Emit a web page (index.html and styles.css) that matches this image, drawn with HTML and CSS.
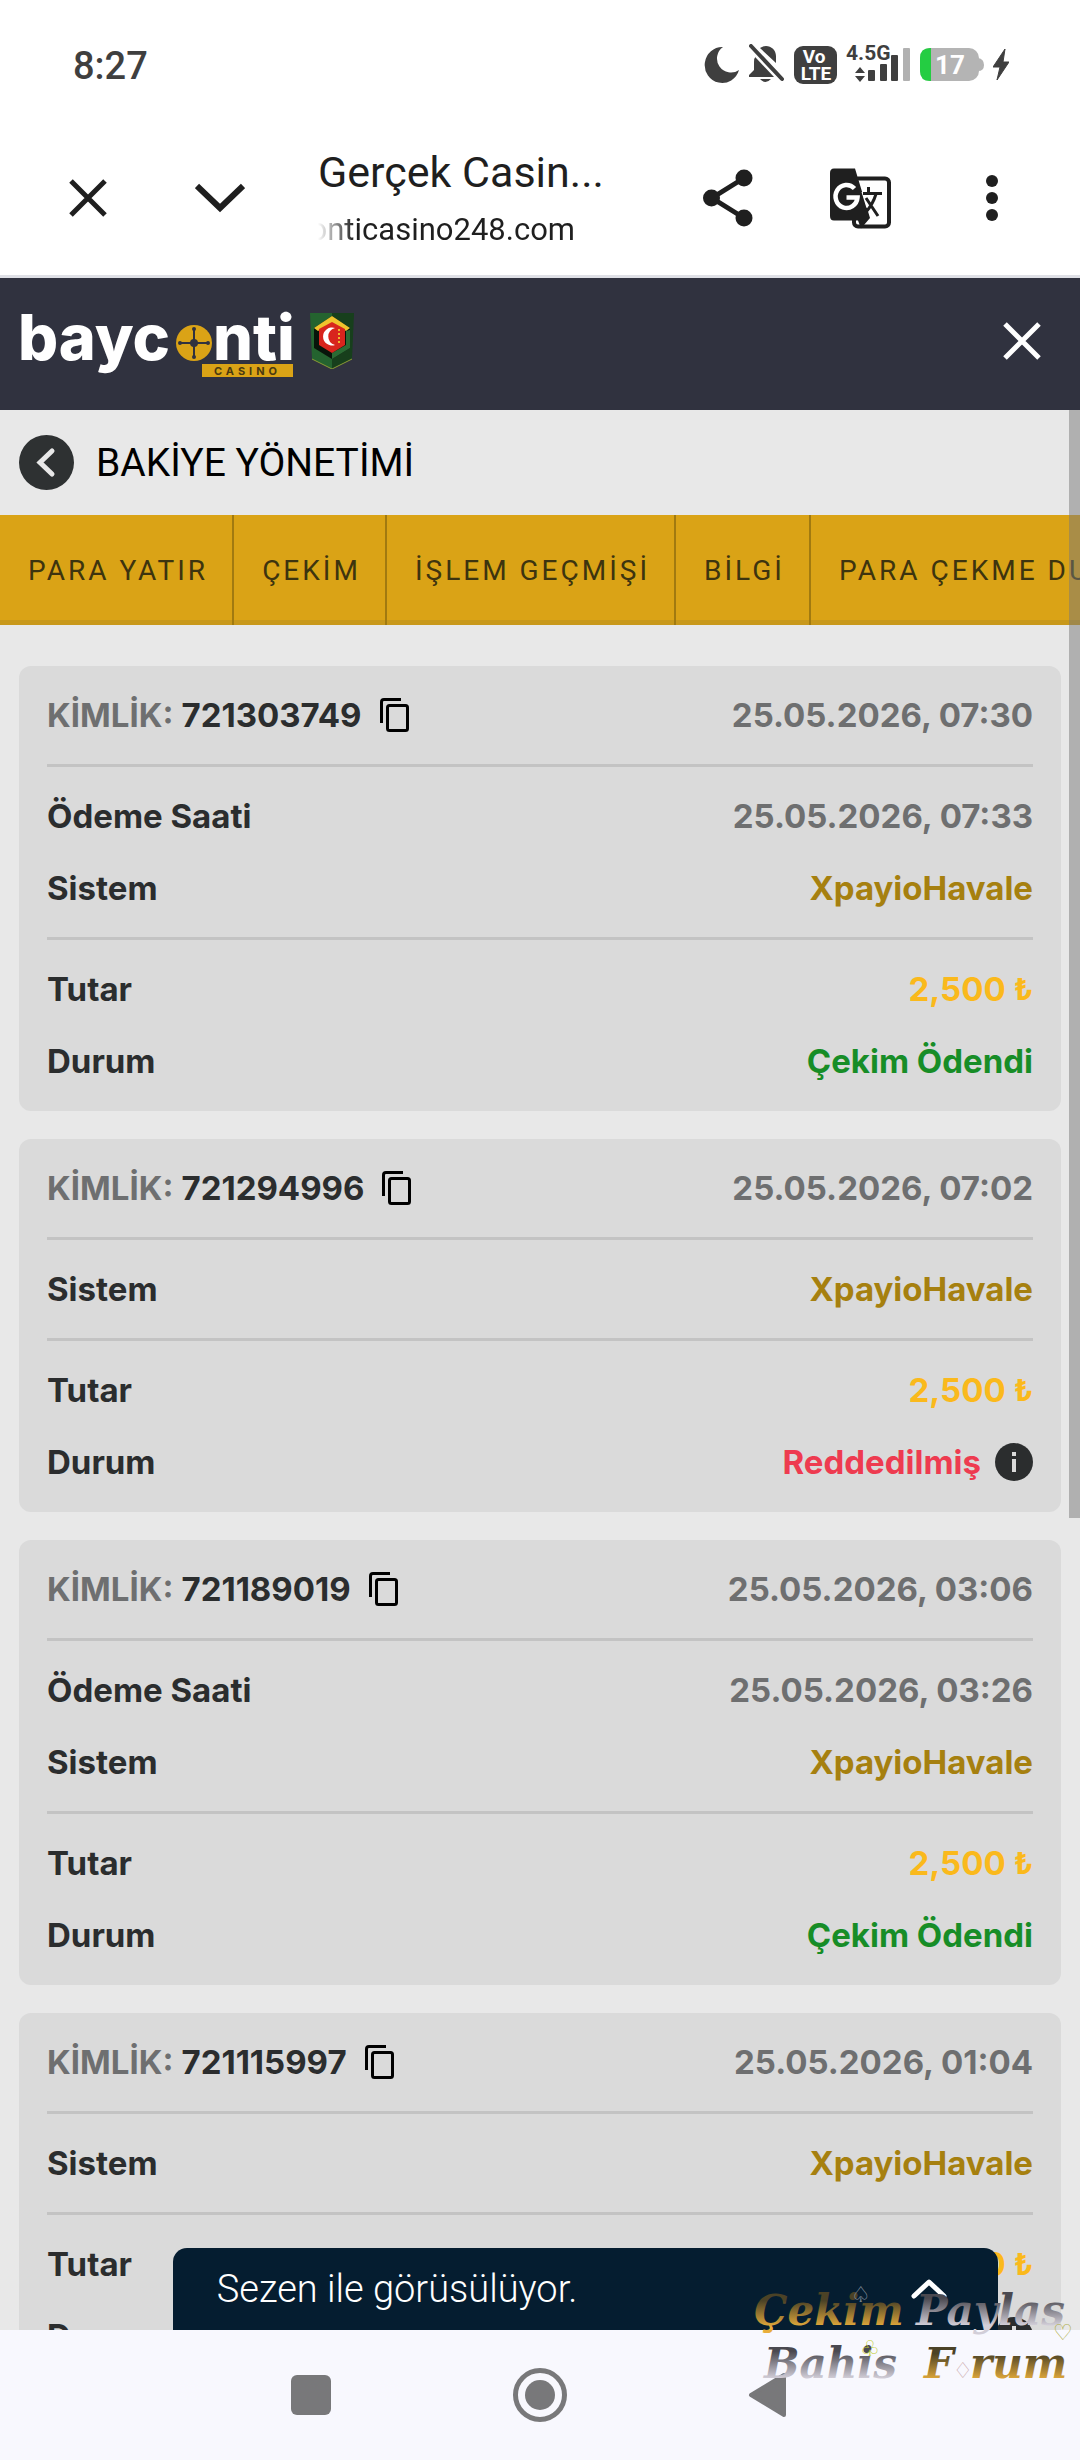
FILE: index.html
```
<!DOCTYPE html>
<html lang="tr">
<head>
<meta charset="utf-8">
<meta name="viewport" content="width=device-width, initial-scale=1">
<title>Gerçek Casino</title>
<link rel="stylesheet" href="styles.css">
</head>
<body>
<svg class="defs" aria-hidden="true">
  <symbol id="copy" viewBox="0 0 30 34"><path d="M1.500 25V4Q1.500 1.500 4 1.500H21" fill="none" stroke="currentColor" stroke-width="3"/><rect x="7.500" y="7.500" width="20" height="25" rx="2" fill="none" stroke="currentColor" stroke-width="3"/></symbol>
  <symbol id="info" viewBox="0 0 38 38"><circle cx="19" cy="19" r="19" fill="#2b2d2e"/><path d="M17 9h4v4h-4zM17 16h4v13h-4z" fill="#dadada"/></symbol>
</svg>
<div class="app">
  <header class="status">
    <span class="clock">8:27</span>
    <div class="status-icons">
      <svg width="36" height="44" viewBox="0 0 36 44"><path d="M19 3A17.500 18 0 1 0 35 26A14 14 0 0 1 19 3Z" fill="#3f3f3f"/></svg>
      <svg width="36" height="44" viewBox="0 0 36 44"><path d="M11 4C18 -1 27 4 27 12V19ZM7 12L28 33H0V31L5 26V18Q5 14 7 12Z" fill="#3f3f3f"/><path d="M2 2L33 35" stroke="#fff" stroke-width="9"/><path d="M2 2L33 35" stroke="#3f3f3f" stroke-width="4" stroke-linecap="round"/><path d="M11 35H22Q16.500 41 11 35Z" fill="#3f3f3f"/></svg>
      <svg width="43" height="44" viewBox="0 0 43 44"><rect y="2" width="43" height="38" rx="9" fill="#3f3f3f"/><text x="20" y="19" class="volte">Vo</text><text x="22" y="36" class="volte">LTE</text></svg>
      <svg width="65" height="44" viewBox="0 0 65 44"><text x="0" y="16" class="net">4.5G</text><path d="M9 29L14 23L19 29ZM9 32L14 38L19 32Z" fill="#3f3f3f"/><g fill="#3f3f3f"><rect x="22" y="26" width="7" height="11" rx="1"/><rect x="34" y="20" width="7" height="17" rx="1"/><rect x="45" y="11" width="7" height="26" rx="1"/></g><rect x="57" y="4" width="7" height="33" rx="1" fill="#b1b1b1"/></svg>
      <svg width="64" height="44" viewBox="0 0 64 44"><rect y="4" width="59" height="33" rx="10" fill="#b4b4b4"/><path d="M58 14q6 1 6 7t-6 6z" fill="#b4b4b4"/><path d="M11 4H10Q0 4 0 14V27Q0 37 10 37H11Z" fill="#24cd42"/><text x="30" y="30" class="charge">17</text></svg>
      <svg width="16" height="44" viewBox="0 0 16 44"><path d="M12 5L0 23H7L4 36L16 18H10Z" fill="#3f3f3f" stroke="#3f3f3f" stroke-width="1"/></svg>
    </div>
  </header>

  <div class="toolbar">
    <button class="tool" aria-label="Kapat"><svg width="40" height="40" viewBox="0 0 40 40"><path d="M3 3L37 37M37 3L3 37" stroke="#1f1f1f" stroke-width="5"/></svg></button>
    <button class="tool" aria-label="Küçült"><svg width="50" height="30" viewBox="0 0 50 30"><path d="M2 3L25 25L48 3" fill="none" stroke="#1f1f1f" stroke-width="6"/></svg></button>
    <div class="page-id">
      <div class="page-title">Gerçek Casin...</div>
      <div class="page-url"><span>onticasino248.com</span></div>
    </div>
    <button class="tool" aria-label="Paylaş"><svg width="50" height="58" viewBox="0 0 50 58"><path d="M41 9L9 29L41 49" fill="none" stroke="#1f1f1f" stroke-width="5"/><g fill="#1f1f1f"><circle cx="41" cy="9" r="8.500"/><circle cx="8.500" cy="29" r="8.500"/><circle cx="41" cy="49" r="8.500"/></g></svg></button>
    <button class="tool" aria-label="Çevir"><svg width="80" height="84" viewBox="0 0 80 84"><rect x="34" y="22.500" width="35" height="48" rx="4" fill="#fff" stroke="#1f1f1f" stroke-width="4"/><path d="M14 12.500H35L50 62L41 72.500L38 64.500H14Q10 64.500 10 60V17Q10 12.500 14 12.500Z" fill="#1f1f1f"/><path d="M34.500 32.500A11 11.500 0 1 0 37.500 41.500H26.500" fill="none" stroke="#fff" stroke-width="4.500"/><path d="M41.500 36L46.500 52L55 38Z" fill="#fff"/><path d="M48.500 31V37M43 37.500H62M56 38Q53 48 46 56M46 42L58 60" fill="none" stroke="#1f1f1f" stroke-width="3"/></svg></button>
    <button class="tool" aria-label="Menü"><svg width="12" height="46" viewBox="0 0 12 46"><g fill="#1f1f1f"><circle cx="6" cy="6" r="6"/><circle cx="6" cy="23" r="6"/><circle cx="6" cy="40" r="6"/></g></svg></button>
  </div>

  <div class="site">
    <div class="brand">
      <a href="#" class="logo" aria-label="bayconti casino">
        <svg width="290" height="80" viewBox="0 0 290 80">
          <text x="-2" y="59" class="word">bayc</text>
          <circle cx="174" cy="42" r="18" fill="#daa316"/>
          <g stroke="#30323f" stroke-width="2" fill="#30323f"><path d="M174 28V56M160 42H188"/><circle cx="174" cy="42" r="3"/><circle cx="174" cy="28" r="1"/><circle cx="174" cy="56" r="1"/><circle cx="160" cy="42" r="1"/><circle cx="188" cy="42" r="1"/></g>
          <text x="193" y="59" class="word">nti</text>
          <rect x="182" y="63" width="91" height="13" fill="#daa316"/>
          <text x="194" y="74" class="casino">CASINO</text>
        </svg>
        <svg width="44" height="56" viewBox="0 0 44 56"><path d="M0 0H22V56L2 46Z" fill="#24632f"/><path d="M22 0H44L42 46L22 56Z" fill="#173f1c"/><path d="M4 15L22 3L40 15V35L22 46L4 35Z" fill="#08150a"/><path d="M4 15L22 3L40 15L36 18L22 10L8 18Z" fill="#f0c32d"/><path d="M22 46L40 35V17L36 18V32L22 40Z" fill="#2b6b34"/><path d="M22 9L35 16V32L22 40L9 32V16Z" fill="#d8251d"/><path d="M25 15A9 9 0 1 0 25 32A10 9 0 0 1 25 15Z" fill="#fff"/><path d="M29 16V32" stroke="#efb52c" stroke-width="2" stroke-dasharray="2 2"/><path d="M2 46L22 56L42 46" fill="none" stroke="#8b9a35" stroke-width="1"/></svg>
      </a>
      <button class="close" aria-label="Kapat"><svg width="38" height="38" viewBox="0 0 38 38"><path d="M2 2L36 36M36 2L2 36" stroke="#fff" stroke-width="5"/></svg></button>
    </div>

    <main class="panel">
      <div class="heading">
        <button class="back" aria-label="Geri"><svg width="55" height="55" viewBox="0 0 55 55"><circle cx="27.500" cy="27.500" r="27.500" fill="#2e3132"/><path d="M33 16L21 27.500L33 39" fill="none" stroke="#e8e8e8" stroke-width="5" stroke-linecap="round"/></svg></button>
        <h1>BAKİYE YÖNETİMİ</h1>
      </div>
      <nav class="tabs">
        <a href="#">PARA YATIR</a><a href="#">ÇEKİM</a><a href="#">İŞLEM GEÇMİŞİ</a><a href="#">BİLGİ</a><a href="#">PARA ÇEKME DURUMU</a>
      </nav>
      <div class="list">
        <article class="card">
          <div class="part row"><div class="id"><span>KİMLİK:</span><b>721303749</b><button class="copy" aria-label="Kopyala"><svg width="30" height="34"><use href="#copy"/></svg></button></div><time>25.05.2026, 07:30</time></div>
          <dl class="part"><div class="row"><dt>Ödeme Saati</dt><dd class="muted">25.05.2026, 07:33</dd></div><div class="row"><dt>Sistem</dt><dd class="system">XpayioHavale</dd></div></dl>
          <dl class="part"><div class="row"><dt>Tutar</dt><dd class="amount">2,500 <span>₺</span></dd></div><div class="row"><dt>Durum</dt><dd class="paid">Çekim Ödendi</dd></div></dl>
        </article>
        <article class="card">
          <div class="part row"><div class="id"><span>KİMLİK:</span><b>721294996</b><button class="copy" aria-label="Kopyala"><svg width="30" height="34"><use href="#copy"/></svg></button></div><time>25.05.2026, 07:02</time></div>
          <dl class="part"><div class="row"><dt>Sistem</dt><dd class="system">XpayioHavale</dd></div></dl>
          <dl class="part"><div class="row"><dt>Tutar</dt><dd class="amount">2,500 <span>₺</span></dd></div><div class="row"><dt>Durum</dt><dd class="rejected">Reddedilmiş<button class="info" aria-label="Bilgi"><svg width="38" height="38"><use href="#info"/></svg></button></dd></div></dl>
        </article>
        <article class="card">
          <div class="part row"><div class="id"><span>KİMLİK:</span><b>721189019</b><button class="copy" aria-label="Kopyala"><svg width="30" height="34"><use href="#copy"/></svg></button></div><time>25.05.2026, 03:06</time></div>
          <dl class="part"><div class="row"><dt>Ödeme Saati</dt><dd class="muted">25.05.2026, 03:26</dd></div><div class="row"><dt>Sistem</dt><dd class="system">XpayioHavale</dd></div></dl>
          <dl class="part"><div class="row"><dt>Tutar</dt><dd class="amount">2,500 <span>₺</span></dd></div><div class="row"><dt>Durum</dt><dd class="paid">Çekim Ödendi</dd></div></dl>
        </article>
        <article class="card">
          <div class="part row"><div class="id"><span>KİMLİK:</span><b>721115997</b><button class="copy" aria-label="Kopyala"><svg width="30" height="34"><use href="#copy"/></svg></button></div><time>25.05.2026, 01:04</time></div>
          <dl class="part"><div class="row"><dt>Sistem</dt><dd class="system">XpayioHavale</dd></div></dl>
          <dl class="part"><div class="row"><dt>Tutar</dt><dd class="amount">2,500 <span>₺</span></dd></div><div class="row"><dt>Durum</dt><dd class="rejected">Reddedilmiş<button class="info" aria-label="Bilgi"><svg width="38" height="38"><use href="#info"/></svg></button></dd></div></dl>
        </article>
      </div>
      <div class="scrollbar"></div>
      <button class="chat">Sezen ile görüsülüyor.<svg width="36" height="20" viewBox="0 0 36 20"><path d="M3 17L18 3L33 17" fill="none" stroke="#fff" stroke-width="5" stroke-linecap="round" stroke-linejoin="round"/></svg></button>
    </main>
  </div>

  <nav class="system-nav">
    <button aria-label="Son uygulamalar"><svg width="60" height="60" viewBox="0 0 60 60"><rect x="10" y="10" width="40" height="40" rx="6" fill="#78787a"/></svg></button>
    <button aria-label="Ana ekran"><svg width="60" height="60" viewBox="0 0 60 60"><circle cx="30" cy="30" r="24.500" fill="none" stroke="#78787a" stroke-width="5"/><circle cx="30" cy="30" r="15" fill="#78787a"/></svg></button>
    <button aria-label="Geri"><svg width="60" height="60" viewBox="0 0 60 60"><path d="M12 30L45 10V50Z" fill="#78787a" stroke="#78787a" stroke-width="4" stroke-linejoin="round"/></svg></button>
  </nav>

  <svg class="stamp" width="330" height="120" viewBox="0 0 330 120">
    <defs>
      <linearGradient id="gold" x1="0" y1="0" x2="0" y2="1"><stop offset=".3" stop-color="#4b4226"/><stop offset=".85" stop-color="#e9ae3c"/></linearGradient>
      <linearGradient id="silver" x1="0" y1="0" x2="0" y2="1"><stop offset=".25" stop-color="#4a4950"/><stop offset=".8" stop-color="#d2ced8"/></linearGradient>
    </defs>
    <g class="script">
      <text x="4" y="45" fill="url(#gold)">Çekim</text><text x="166" y="45" fill="url(#silver)">Paylas</text>
      <text x="14" y="98" fill="url(#silver)">Bahis</text><text x="174" y="98" fill="url(#gold)">F</text><text x="220" y="98" fill="url(#gold)">rum</text>
    </g>
    <g class="suit"><text x="101" y="22" fill="#8f9aa3">♤</text><text x="110" y="76" fill="#c3cf2e">♧</text><text x="203" y="98" fill="#c9a6a8">♢</text><text x="303" y="60" fill="#a9a83a">♡</text></g>
  </svg>
</div>
</body>
</html>
```
FILE: styles.css
```
* { box-sizing: border-box; }
body { margin: 0; font-family: Roboto, sans-serif; background: #fff; }
button { border: 0; padding: 0; background: none; color: inherit; font: inherit; display: flex; align-items: center; justify-content: center; }
svg { display: block; flex: none; }
a { color: inherit; text-decoration: none; }
.defs { position: absolute; width: 0; height: 0; }
.app { position: relative; display: flex; flex-direction: column; height: 100vh; overflow: hidden; }

.status { flex: none; display: flex; align-items: center; justify-content: space-between; height: 121px; padding: 10px 71px 0 73px; color: #3f3f3f; }
.clock { font-size: 38px; font-weight: 500; }
.status-icons { display: flex; gap: 9px; }
.volte, .net, .charge { font-family: Roboto, sans-serif; font-weight: 700; }
.volte { font-size: 19px; fill: #fff; text-anchor: middle; }
.net { font-size: 21px; fill: #3f3f3f; }
.charge { font-size: 26px; fill: #fff; text-anchor: middle; }

.toolbar { flex: none; display: flex; align-items: center; gap: 52px; height: 157px; padding: 0 48px; border-bottom: 3px solid #dfe0e6; color: #1f1f1f; }
.tool { flex: none; width: 80px; height: 84px; }
.page-id { flex: 1; min-width: 0; padding-left: 6px; }
.page-title { font-size: 43px; line-height: 60px; white-space: nowrap; }
.page-url { display: flex; justify-content: flex-end; width: 257px; padding-top: 4px; overflow: hidden; font-size: 31px; line-height: 48px; mask-image: linear-gradient(to right, transparent, #000 36px); }

.site { flex: 1; min-height: 0; display: flex; flex-direction: column; background: #e8e8e8; }
.brand { flex: none; display: flex; align-items: center; justify-content: space-between; height: 132px; padding: 0 39px 6px 20px; background: #30323f; }
.logo { display: flex; align-items: center; }
.word { font-family: Inter, sans-serif; font-size: 63px; font-weight: 800; fill: #fff; }
.casino { font-family: Inter, sans-serif; font-size: 11px; font-weight: 700; letter-spacing: 4px; fill: #4a3a10; }

.panel { position: relative; flex: 1; min-height: 0; overflow: hidden; font-family: Inter, sans-serif; }
.heading { display: flex; align-items: center; gap: 22px; height: 105px; padding: 0 19px; }
.heading h1 { margin: 0; font: 400 39px Roboto, sans-serif; color: #000; }
.tabs { display: flex; height: 110px; overflow: hidden; background: #daa316; box-shadow: inset 0 -5px #c8981b; }
.tabs a { flex: none; display: flex; align-items: center; padding: 0 24px 0 28px; border-right: 2px solid #a17a10; font: 400 28px Roboto, sans-serif; letter-spacing: 3px; color: #3d340f; }

.list { display: flex; flex-direction: column; gap: 28px; padding: 41px 19px; }
.card { padding: 0 28px 1px; border-radius: 12px; background: #dadada; font-size: 33px; font-weight: 700; color: #2b2d2e; }
.part { margin: 0; padding: 13px 0; border-bottom: 3px solid #c3c3c3; }
.part:last-child { border-bottom: 0; }
.row { display: flex; align-items: center; justify-content: space-between; min-height: 72px; }
.part.row { min-height: 101px; padding: 0; }
.id { display: flex; align-items: center; gap: 8px; }
.id b { font-weight: 700; }
.id span, .card time, .muted { color: #6e6f70; }
.copy { margin-left: 10px; color: #000; }
dd { display: flex; align-items: center; gap: 8px; margin: 0; }
.system { color: #a6800f; }
.amount { color: #fab91c; }
.amount span { font-size: 30px; }
.paid { color: #178d27; }
.rejected { gap: 14px; color: #ee3b50; }

.scrollbar { position: absolute; top: 0; right: 0; width: 11px; height: 1108px; background: rgba(120, 120, 120, .5); }
.chat { position: absolute; left: 16%; right: 82px; bottom: 0; height: 82px; justify-content: space-between; padding: 0 51px 0 44px; border-radius: 14px 14px 0 0; background: #051d30; color: #fff; font: 300 38px Roboto, sans-serif; }

.system-nav { flex: none; display: flex; align-items: center; justify-content: center; gap: 169px; height: 130px; background: #f8f8fe; }
.stamp { position: absolute; right: 0; bottom: 60px; pointer-events: none; }
.script { font: italic 700 42px "DejaVu Serif", serif; }
.suit { font: 22px "DejaVu Sans", sans-serif; }
```
